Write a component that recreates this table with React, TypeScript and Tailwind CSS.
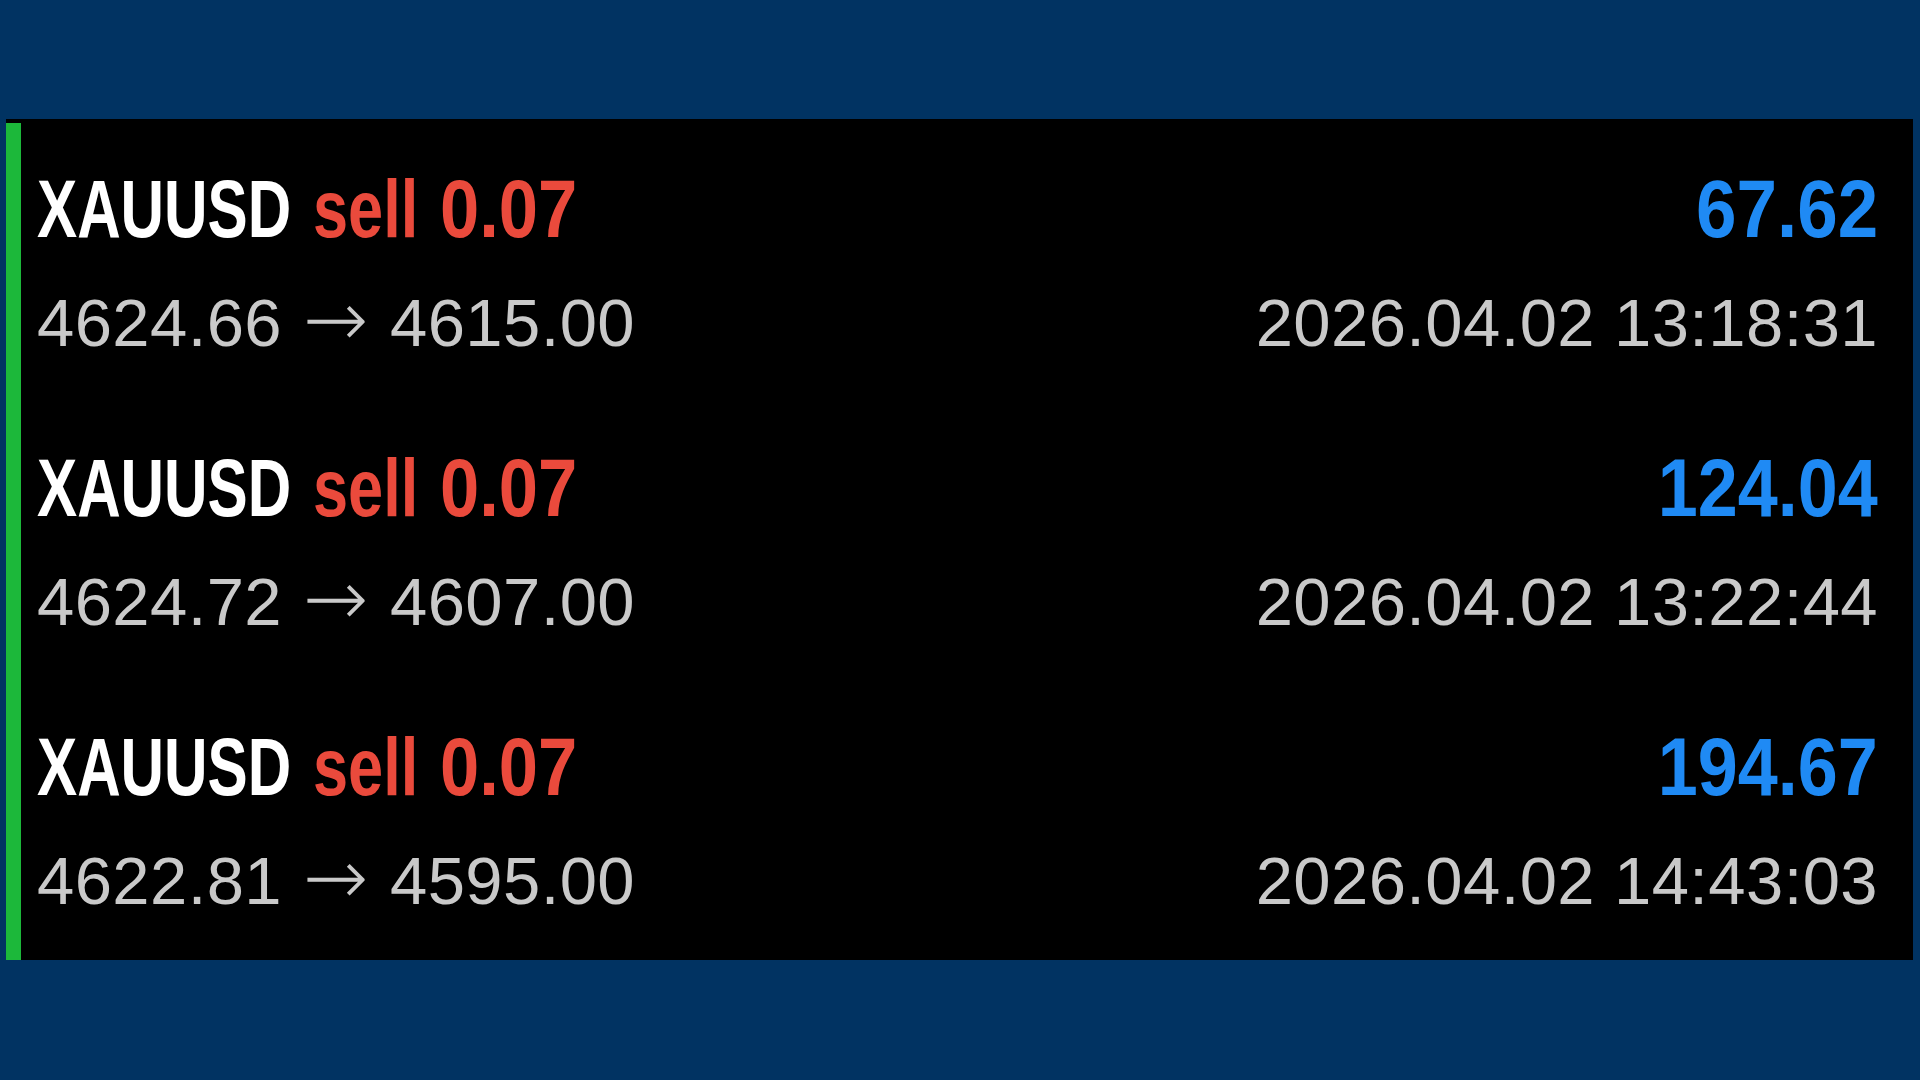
import React from "react";

type Trade = {
  pnl: string;
  pnlW: string;
  pnlScale: string;
  open: string;
  close: string;
  time: string;
};

const trades: Trade[] = [
  { pnl: "67.62", pnlW: "w-[182px]", pnlScale: "scale-x-[0.888]", open: "4624.66", close: "4615.00", time: "2026.04.02 13:18:31" },
  { pnl: "124.04", pnlW: "w-[220px]", pnlScale: "scale-x-[0.877]", open: "4624.72", close: "4607.00", time: "2026.04.02 13:22:44" },
  { pnl: "194.67", pnlW: "w-[220px]", pnlScale: "scale-x-[0.877]", open: "4622.81", close: "4595.00", time: "2026.04.02 14:43:03" },
];

function Row({ t }: { t: Trade }) {
  return (
    <div className="flex flex-col">
      <div className="flex h-[82px] items-start justify-between text-[82px] leading-[82px] font-bold whitespace-nowrap">
        <div className="flex">
          <div className="w-[254px] shrink-0">
            <span className="inline-block origin-left scale-x-[0.734] text-white">XAUUSD</span>
          </div>
          <div className="w-[22px] shrink-0" />
          <div className="w-[105px] shrink-0">
            <span className="inline-block origin-left scale-x-[0.77] text-[#ea4a3c]">sell</span>
          </div>
          <div className="w-[22px] shrink-0" />
          <div className="w-[138px] shrink-0">
            <span className="inline-block origin-left scale-x-[0.86] text-[#ea4a3c]">0.07</span>
          </div>
        </div>
        <div className={`${t.pnlW} flex shrink-0 justify-end`}>
          <span className={`inline-block origin-right ${t.pnlScale} text-[#1f8af4]`}>{t.pnl}</span>
        </div>
      </div>
      <div className="mt-[39px] flex h-[67px] items-baseline justify-between text-[67px] leading-[67px] text-[#c9c9c9] whitespace-nowrap tracking-[0.4px]">
        <div className="flex items-baseline">
          <span>{t.open}</span>
          <span className="inline-block w-[108px] text-center font-['DejaVu_Sans',sans-serif] text-[78px] leading-[59px] font-extralight tracking-normal">→</span>
          <span>{t.close}</span>
        </div>
        <span>{t.time}</span>
      </div>
    </div>
  );
}

export default function App() {
  return (
    <div className="w-[1920px] h-[1080px] bg-[#013362] pt-[119px] pl-[6px] pr-[7px] font-['Liberation_Sans',Arial,sans-serif]">
      <div className="flex h-[841px] bg-black">
        <div className="mt-[4px] w-[15px] shrink-0 bg-[#1cb83a]" />
        <div className="flex flex-1 flex-col gap-[91px] pl-[16px] pr-[35px] pt-[49px]">
          {trades.map((t, i) => (
            <Row key={i} t={t} />
          ))}
        </div>
      </div>
    </div>
  );
}
